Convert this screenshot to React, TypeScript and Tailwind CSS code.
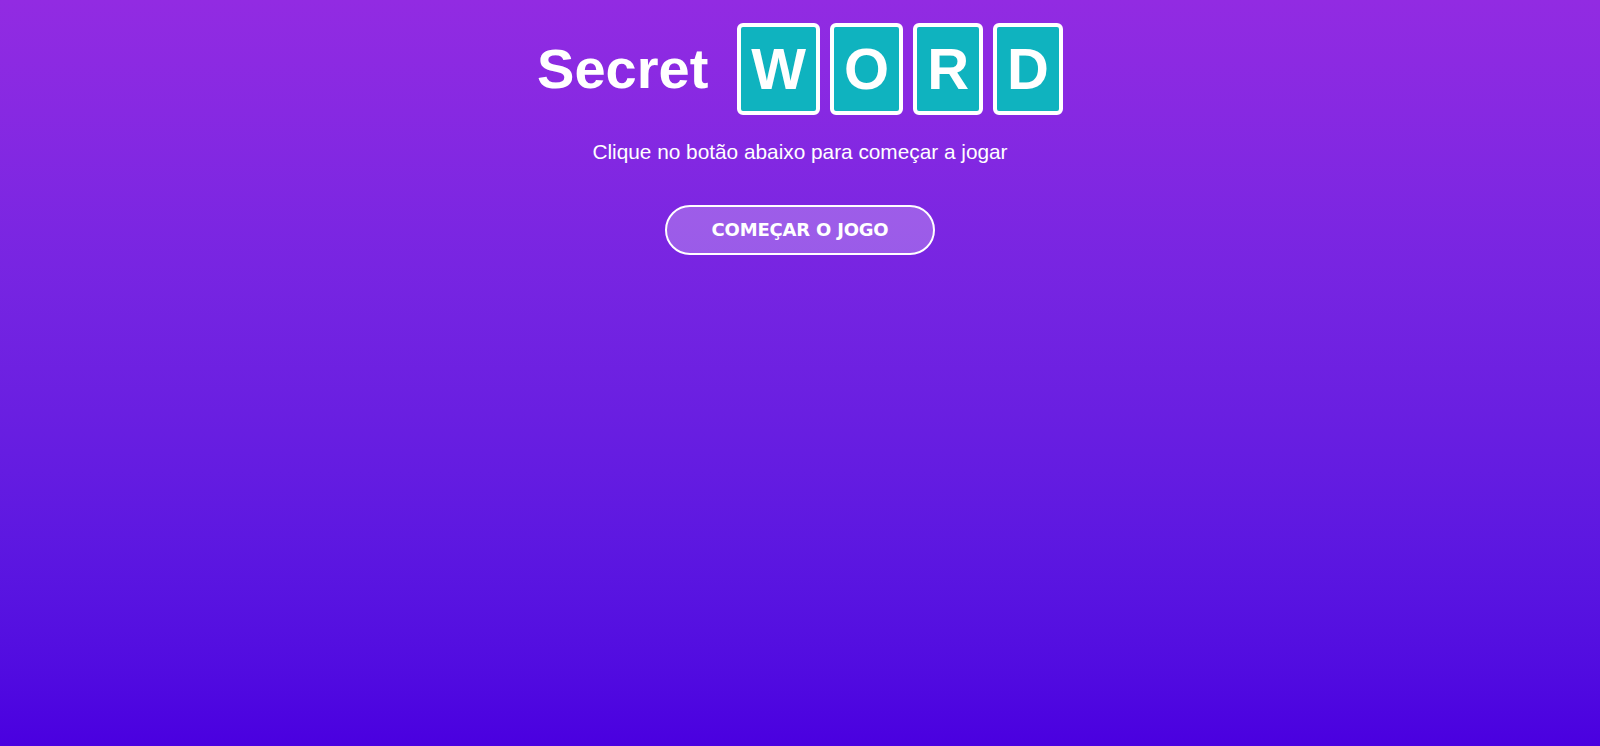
const letters = ["W", "O", "R", "D"];

const LetterTile = ({ letter }: { letter: string }) => {
  return (
    <span className="block rounded-[6px] border-4 border-white bg-[#0fb3bf] px-[10px] py-[10px] text-[58px] font-bold leading-[64px] text-white">
      {letter}
    </span>
  );
};

const App = () => {
  return (
    <main className="flex h-[746px] w-full flex-col items-center bg-gradient-to-b from-[#922be2] to-[#4a00e0] pt-[23px] font-['Liberation_Sans',Arial,sans-serif] text-white">
      <h1 className="flex items-center">
        <span className="mr-[29px] text-[56px] font-bold leading-none">
          Secret
        </span>
        <span className="flex gap-[10px]">
          {letters.map((letter) => (
            <LetterTile letter={letter} key={letter} />
          ))}
        </span>
      </h1>
      <p className="mt-[25px] text-[20.8px] leading-[24px]">
        Clique no botão abaixo para começar a jogar
      </p>
      <button className="mt-[41px] rounded-full border-2 border-white bg-white/25 px-[45px] py-[12px] font-['DejaVu_Sans',Verdana,sans-serif] text-[18px] font-bold leading-[22px] tracking-[-0.2px] text-white">
        COMEÇAR O JOGO
      </button>
    </main>
  );
};

export default App;
